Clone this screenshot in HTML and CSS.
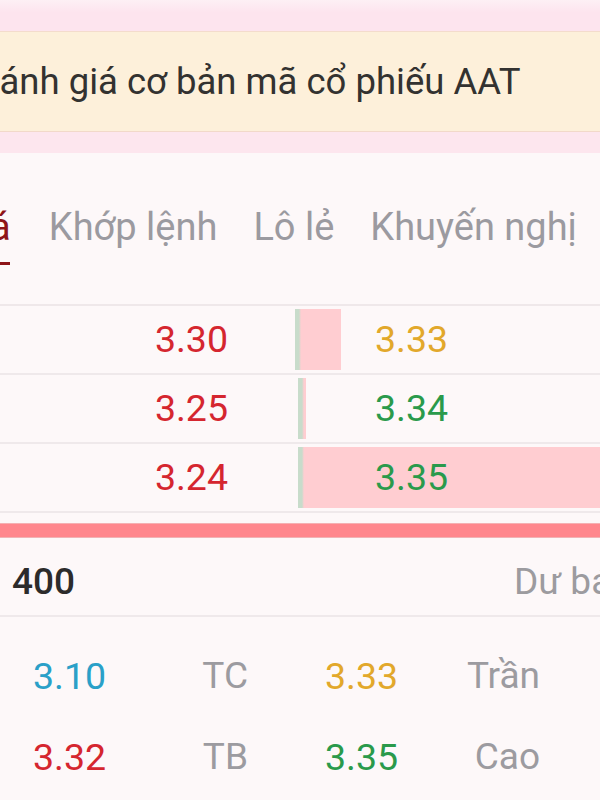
FILE: index.html
```html
<!DOCTYPE html>
<html lang="vi">
<head>
<meta charset="utf-8">
<link rel="stylesheet" href="styles.css">
</head>
<body>
<div class="page">
  <div class="top-band"></div>
  <div class="banner"><span class="banner-text">Đánh giá cơ bản mã cổ phiếu AAT</span></div>
  <div class="gap-band"></div>
  <div class="card">
    <div class="tabs">
      <div class="tab active first">Giá</div>
      <div class="tab">Khớp lệnh</div>
      <div class="tab">Lô lẻ</div>
      <div class="tab">Khuyến nghị</div>
    </div>
    <div class="book">
      <div class="book-row">
        <div class="bid red">3.30</div>
        <div class="ask-cell">
          <div class="bar" style="left:-2px;width:46px"></div>
          <span class="ask gold">3.33</span>
        </div>
      </div>
      <div class="book-row">
        <div class="bid red">3.25</div>
        <div class="ask-cell">
          <div class="bar" style="left:1px;width:8px"></div>
          <span class="ask green">3.34</span>
        </div>
      </div>
      <div class="book-row">
        <div class="bid red">3.24</div>
        <div class="ask-cell">
          <div class="bar" style="left:1px;width:302px"></div>
          <span class="ask green">3.35</span>
        </div>
      </div>
    </div>
    <div class="red-strip"></div>
    <div class="total-row">
      <span class="total">400</span>
      <span class="total-label">Dư bán</span>
    </div>
    <div class="stats">
      <div class="stat-row">
        <div class="stat"><span class="val blue">3.10</span><span class="lbl">TC</span></div>
        <div class="stat"><span class="val gold">3.33</span><span class="lbl">Trần</span></div>
      </div>
      <div class="stat-row">
        <div class="stat"><span class="val red">3.32</span><span class="lbl">TB</span></div>
        <div class="stat"><span class="val green">3.35</span><span class="lbl">Cao</span></div>
      </div>
    </div>
  </div>
</div>
</body>
</html>
```
FILE: styles.css
```css
* { box-sizing: border-box; }
html, body { margin: 0; padding: 0; }
body {
  width: 600px;
  height: 800px;
  overflow: hidden;
  background: #fde6ee;
  font-family: Roboto, "Noto Sans", "Liberation Sans", sans-serif;
}
.page { width: 600px; height: 800px; overflow: hidden; }
.top-band {
  height: 31px;
  background: linear-gradient(#fdf0f5, #fde4ee 40%);
}
.banner {
  height: 101px;
  background: #fdf0da;
  border-top: 1px solid #f4dccc;
  border-bottom: 1px solid #f2d9c9;
  display: flex;
  align-items: center;
  white-space: nowrap;
  overflow: hidden;
}
.banner-text {
  font-size: 36.5px;
  color: #333230;
  margin-left: -25px;
}
.gap-band { height: 21px; background: #fde6ee; }
.card { background: #fdf8f9; height: 647px; overflow: hidden; }
.red { color: #d5262f; }
.gold { color: #e2a82b; }
.green { color: #2a9a4b; }
.blue { color: #2aa0c8; }

.tabs {
  height: 153px;
  padding-top: 52px;
  display: flex;
  gap: 36px;
  border-bottom: 2px solid #efe8ea;
  white-space: nowrap;
}
.tab {
  font-size: 38px;
  line-height: 44px;
  color: #9b9aa0;
  position: relative;
}
.tab.first { margin-left: -45px; margin-right: 2px; }
.tab.active { color: #8e1418; }
.tab.active::after {
  content: "";
  position: absolute;
  left: 0;
  right: 1px;
  top: 57px;
  height: 3px;
  background: #8e1418;
}

.book-row {
  height: 69px;
  display: flex;
  border-bottom: 2px solid #efe9eb;
}
.bid {
  width: 297px;
  padding-right: 69px;
  text-align: right;
  font-size: 37.5px;
  line-height: 66px;
}
.ask-cell {
  flex: 1;
  position: relative;
  padding-left: 78px;
}
.bar {
  position: absolute;
  top: 3px;
  bottom: 3px;
  background: linear-gradient(90deg, #c8dccb 0, #c8dccb 4px, #ffcdd1 6px);
}
.ask {
  position: relative;
  font-size: 37.5px;
  line-height: 66px;
}

.red-strip {
  margin-top: 10px;
  height: 15px;
  background: #ff878d;
  border-top: 1px solid #f5b0b2;
  border-bottom: 1px solid #f0b3b5;
}
.total-row {
  height: 79px;
  display: flex;
  align-items: center;
  padding: 10px 0 0 12px;
  border-bottom: 2px solid #efe9eb;
  white-space: nowrap;
  overflow: hidden;
}
.total {
  width: 502px;
  flex: none;
  font-size: 37px;
  font-weight: 500;
  color: #2c2b2b;
}
.total-label {
  flex: none;
  font-size: 37px;
  color: #9c9b9f;
}

.stats { padding-top: 18px; }
.stat-row {
  height: 81px;
  display: flex;
}
.stat {
  width: 292px;
  display: flex;
  align-items: center;
  justify-content: space-between;
  padding: 0 44px 0 33px;
}
.val { font-size: 37.5px; }
.lbl { font-size: 37px; color: #9c9ba0; }
```
